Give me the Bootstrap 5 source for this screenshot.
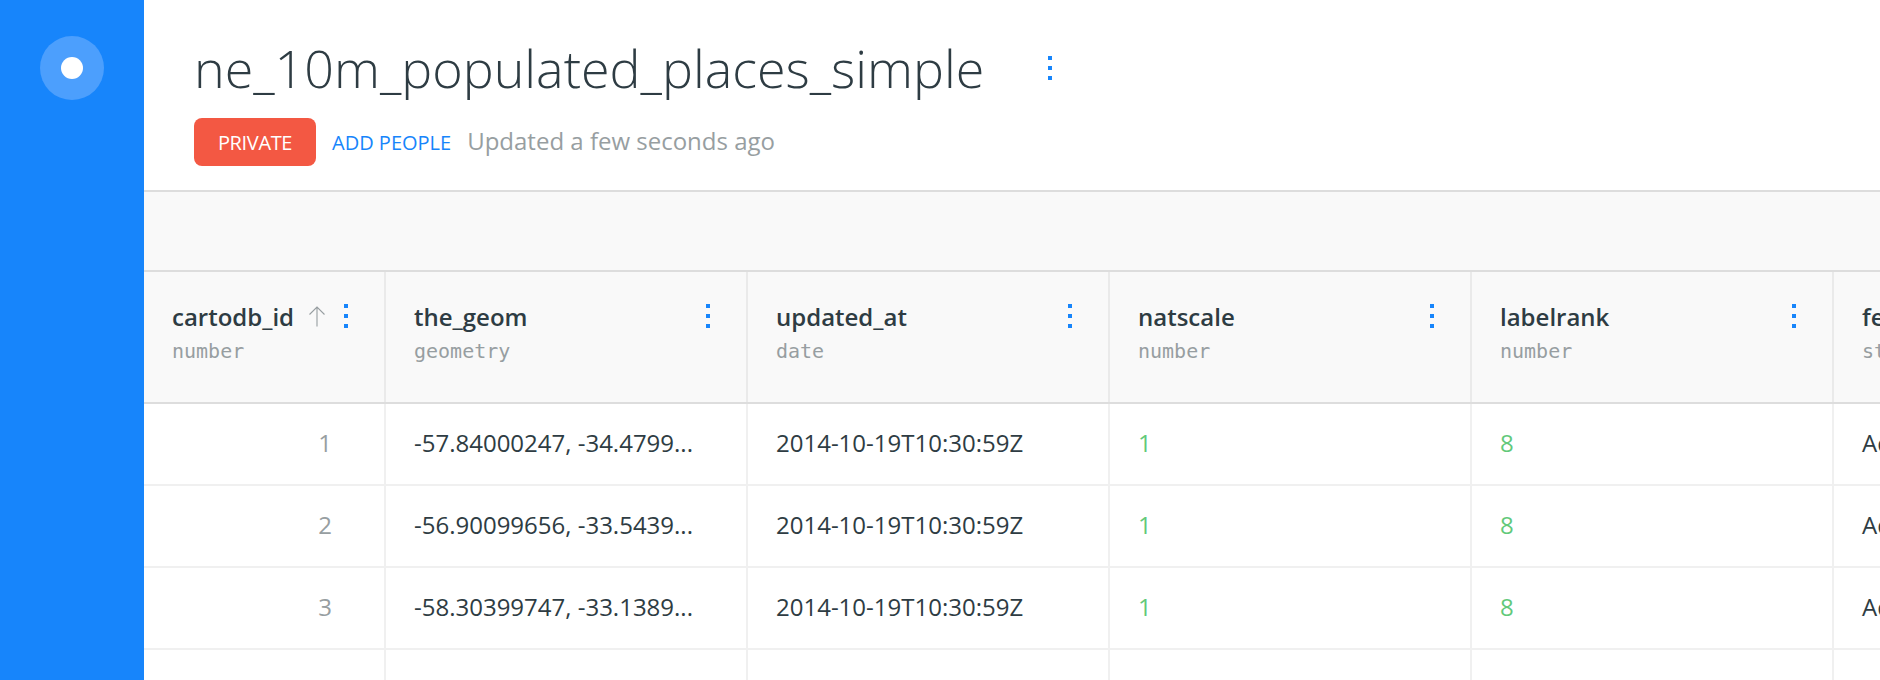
<!DOCTYPE html>
<html lang="en">
<head>
<meta charset="utf-8">
<title>ne_10m_populated_places_simple</title>
<link href="https://cdn.jsdelivr.net/npm/bootstrap@5.3.0/dist/css/bootstrap.min.css" rel="stylesheet">
<style>
body{font-family:"Open Sans",sans-serif;font-size:24px;line-height:32px;color:#2e3c43;background:#fff;height:100vh}
.side-rail{width:144px;background:#1785fb;padding-top:36px}
.rail-logo{width:64px;height:64px;background:#4c9ffd}
.rail-logo span{width:22px;height:22px}
.dataset-head{height:192px;border-bottom:2px solid #ddd;padding:33px 50px 0}
.dataset-head h1{font-size:52px;line-height:70px;font-weight:300}
.dots{width:4px;height:24px;fill:#1785fb;display:block}
.title-dots{margin-left:64px;margin-top:23px}
.meta-row{margin-top:15px;height:48px}
.btn-private{width:122px;height:48px;border-radius:8px;background:#f35843;color:#fff;font-size:20px;letter-spacing:-.35px;padding:2px 0 0}
.add-people{font-size:20px;color:#1785fb;margin-left:16px;padding-top:1px}
.soft{color:#979ea1}
.updated{margin-left:16px;padding-bottom:2px}
.tool-strip{height:80px;background:#f9f9f9;border-bottom:2px solid #ddd}
.data-grid{table-layout:fixed;width:2052px;border-collapse:separate;border-spacing:0}
.data-grid col{width:362px}
.data-grid col:first-child{width:242px}
.data-grid th{height:132px;background:#f9f9f9;border-bottom:2px solid #ddd;box-shadow:inset -2px 0 #eaeaea;padding:29px 38px 0 28px;vertical-align:top;font-weight:400}
.data-grid th .dots{margin-top:3px}
.data-grid td{height:82px;border-bottom:2px solid #f0f0f0;box-shadow:inset -2px 0 #f0f0f0;padding:0 54px 2px 28px;vertical-align:middle}
.col-label{font-weight:600}
.sort-arrow{width:16px;height:21px;margin:5px 19px 0 0;fill:none;stroke:#979ea1;stroke-width:1.100}
.col-kind{font:20px/28px "DejaVu Sans Mono",monospace;color:#979ea1;margin-top:4px}
.num{color:#62c97a}
</style>
<script src="https://cdn.jsdelivr.net/npm/bootstrap@5.3.0/dist/js/bootstrap.bundle.min.js"></script>
</head>
<body class="d-flex overflow-hidden">
<svg class="d-none"><symbol id="dots" viewBox="0 0 4 24"><path d="M0 0h4v4H0zM0 10h4v4H0zM0 20h4v4H0z"/></symbol></svg>
<aside class="side-rail flex-shrink-0 d-flex justify-content-center align-items-start">
<a class="rail-logo rounded-circle d-flex align-items-center justify-content-center" href="#" aria-label="Home"><span class="bg-white rounded-circle"></span></a>
</aside>
<main class="flex-grow-1 overflow-hidden">
<header class="dataset-head">
<div class="d-flex align-items-start"><h1 class="mb-0">ne_10m_populated_places_simple</h1><svg class="dots title-dots"><use href="#dots"/></svg></div>
<div class="meta-row d-flex align-items-center">
<button class="btn btn-private border-0">PRIVATE</button>
<a class="add-people text-decoration-none" href="#">ADD PEOPLE</a>
<span class="updated soft">Updated a few seconds ago</span>
</div>
</header>
<div class="tool-strip"></div>
<table class="data-grid">
<colgroup><col><col><col><col><col><col></colgroup>
<thead><tr>
<th><div class="d-flex"><span class="col-label me-auto">cartodb_id</span><svg class="sort-arrow" viewBox="0 0 16 21"><path d="M8 20.5V1M.5 8.500 8 1l7.500 7.500"/></svg><svg class="dots"><use href="#dots"/></svg></div><div class="col-kind">number</div></th>
<th><div class="d-flex justify-content-between"><span class="col-label">the_geom</span><svg class="dots"><use href="#dots"/></svg></div><div class="col-kind">geometry</div></th>
<th><div class="d-flex justify-content-between"><span class="col-label">updated_at</span><svg class="dots"><use href="#dots"/></svg></div><div class="col-kind">date</div></th>
<th><div class="d-flex justify-content-between"><span class="col-label">natscale</span><svg class="dots"><use href="#dots"/></svg></div><div class="col-kind">number</div></th>
<th><div class="d-flex justify-content-between"><span class="col-label">labelrank</span><svg class="dots"><use href="#dots"/></svg></div><div class="col-kind">number</div></th>
<th><div class="d-flex justify-content-between"><span class="col-label">featurecla</span><svg class="dots"><use href="#dots"/></svg></div><div class="col-kind">string</div></th>
</tr></thead>
<tbody>
<tr><td class="text-end soft">1</td><td class="text-nowrap">-57.84000247, -34.4799...</td><td>2014-10-19T10:30:59Z</td><td class="num">1</td><td class="num">8</td><td class="text-nowrap">Admin-1 capital</td></tr>
<tr><td class="text-end soft">2</td><td class="text-nowrap">-56.90099656, -33.5439...</td><td>2014-10-19T10:30:59Z</td><td class="num">1</td><td class="num">8</td><td class="text-nowrap">Admin-1 capital</td></tr>
<tr><td class="text-end soft">3</td><td class="text-nowrap">-58.30399747, -33.1389...</td><td>2014-10-19T10:30:59Z</td><td class="num">1</td><td class="num">8</td><td class="text-nowrap">Admin-1 capital</td></tr>
<tr><td></td><td></td><td></td><td></td><td></td><td></td></tr>
</tbody>
</table>
</main>
</body>
</html>
